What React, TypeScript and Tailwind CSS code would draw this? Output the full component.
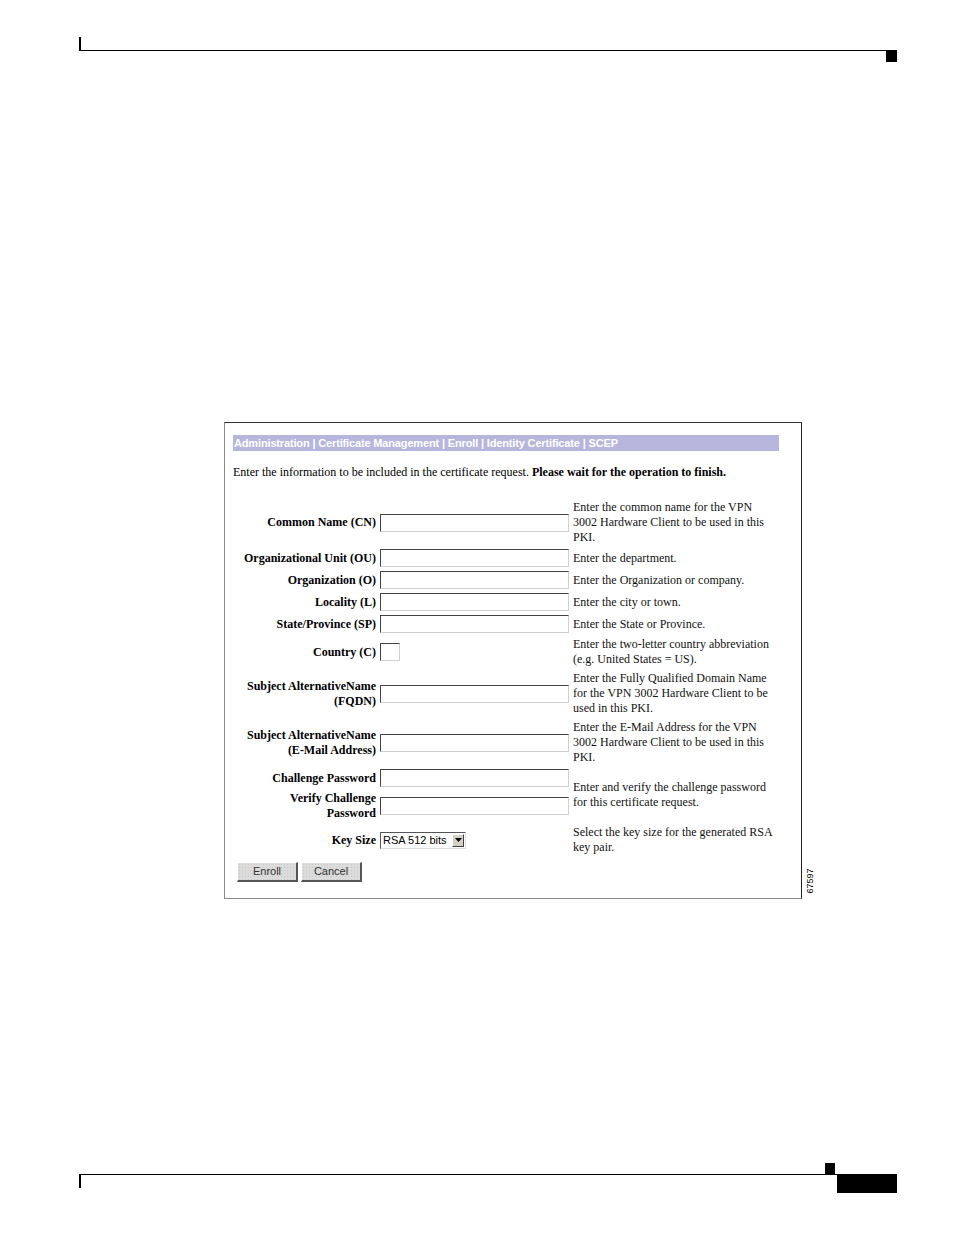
import type { ReactNode } from "react";

type Row = {
  label: ReactNode;
  input: "text" | "short" | "select" | "none";
  desc?: ReactNode;
  descSpan?: number;
};

const serif = { fontFamily: '"Liberation Serif", "Times New Roman", serif' };
const sans = { fontFamily: '"Liberation Sans", Arial, sans-serif' };

const rows: Row[] = [
  {
    label: "Common Name (CN)",
    input: "text",
    desc: (
      <>
        Enter the common name for the VPN
        <br />
        3002 Hardware Client to be used in this
        <br />
        PKI.
      </>
    ),
  },
  { label: "Organizational Unit (OU)", input: "text", desc: "Enter the department." },
  { label: "Organization (O)", input: "text", desc: "Enter the Organization or company." },
  { label: "Locality (L)", input: "text", desc: "Enter the city or town." },
  { label: "State/Province (SP)", input: "text", desc: "Enter the State or Province." },
  {
    label: "Country (C)",
    input: "short",
    desc: (
      <>
        Enter the two-letter country abbreviation
        <br />
        (e.g. United States = US).
      </>
    ),
  },
  {
    label: (
      <>
        Subject AlternativeName
        <br />
        (FQDN)
      </>
    ),
    input: "text",
    desc: (
      <>
        Enter the Fully Qualified Domain Name
        <br />
        for the VPN 3002 Hardware Client to be
        <br />
        used in this PKI.
      </>
    ),
  },
  {
    label: (
      <>
        Subject AlternativeName
        <br />
        (E-Mail Address)
      </>
    ),
    input: "text",
    desc: (
      <>
        Enter the E-Mail Address for the VPN
        <br />
        3002 Hardware Client to be used in this
        <br />
        PKI.
      </>
    ),
  },
  {
    label: "Challenge Password",
    input: "text",
    descSpan: 2,
    desc: (
      <>
        Enter and verify the challenge password
        <br />
        for this certificate request.
      </>
    ),
  },
  {
    label: (
      <>
        Verify Challenge
        <br />
        Password
      </>
    ),
    input: "text",
  },
  {
    label: "Key Size",
    input: "select",
    desc: (
      <>
        Select the key size for the generated RSA
        <br />
        key pair.
      </>
    ),
  },
];

function TextBox({ short }: { short?: boolean }) {
  return (
    <div
      className={
        "h-[18px] bg-white border-t border-l border-t-[#444] border-l-[#444] border-b border-r border-b-[#d0d0d0] border-r-[#d0d0d0] " +
        (short ? "w-[20px]" : "w-[189px]")
      }
    />
  );
}

function KeySelect() {
  return (
    <div
      className="flex h-[17px] w-[86px] items-center bg-white border-t border-l border-t-[#555] border-l-[#555] border-b border-r border-b-[#ddd] border-r-[#ddd]"
      style={sans}
    >
      <span className="flex-1 pl-[2px] text-[11px] leading-[13px] text-black">
        RSA 512 bits
      </span>
      <span className="mr-[1px] flex h-[13px] w-[12px] items-center justify-center bg-[#d4d0c8] border-t border-l border-t-white border-l-white border-b border-r border-b-[#404040] border-r-[#404040]">
        <svg width="7" height="4" viewBox="0 0 7 4">
          <path d="M0 0h7L3.5 4z" fill="#000" />
        </svg>
      </span>
    </div>
  );
}

function Button({ children }: { children: ReactNode }) {
  return (
    <div
      className="flex h-[20px] w-[61px] items-center justify-center bg-[#dcdcdc] border-t border-l border-t-white border-l-white border-b-2 border-r-2 border-b-[#555] border-r-[#555] text-[11px] text-[#333]"
      style={{
        ...sans,
        backgroundImage:
          "radial-gradient(circle, #c8c8c8 0.6px, transparent 0.7px)",
        backgroundSize: "3px 3px",
      }}
    >
      {children}
    </div>
  );
}

export default function App() {
  return (
    <div className="flex h-[1235px] w-[954px] flex-col bg-white">
      {/* page header */}
      <div className="pt-[37px]">
        <div className="ml-[79px] h-[14px] w-[818px] border-l-2 border-b-[1.5px] border-black" />
        <div className="flex justify-end pr-[57px]">
          <div className="h-[11px] w-[11px] bg-black" />
        </div>
      </div>

      {/* screen capture */}
      <div className="relative ml-[224px] mt-[360px] h-[477px] w-[578px] border border-[#8a8a8a] border-t-[#333] border-r-[#222] pl-[8px] pt-[12px]">
        <div
          className="h-[16px] w-[546px] bg-[#b6b6dc] pl-[1px] text-[11px] font-bold leading-[16px] tracking-[-0.15px] text-white"
          style={sans}
        >
          Administration | Certificate Management | Enroll | Identity Certificate | SCEP
        </div>

        <p className="mt-[14px] text-[12px] leading-[15px] text-black" style={serif}>
          Enter the information to be included in the certificate request.{" "}
          <b>Please wait for the operation to finish.</b>
        </p>

        <table className="mt-[18px] border-collapse" style={serif}>
          <tbody>
            {rows.map((r, i) => (
              <tr key={i}>
                <td className="w-[147px] py-[2px] pr-[4px] text-right align-middle text-[12px] font-bold leading-[15px] text-black whitespace-nowrap">
                  {r.label}
                </td>
                <td className="w-[193px] py-[2px] align-middle">
                  {r.input === "text" && <TextBox />}
                  {r.input === "short" && <TextBox short />}
                  {r.input === "select" && <KeySelect />}
                </td>
                {r.desc !== undefined && (
                  <td
                    rowSpan={r.descSpan}
                    className="py-[2px] align-middle text-[12px] leading-[15px] text-[#111] whitespace-nowrap"
                  >
                    {r.desc}
                  </td>
                )}
              </tr>
            ))}
          </tbody>
        </table>

        <div className="ml-[4px] mt-[5px] flex gap-[3px]">
          <Button>Enroll</Button>
          <Button>Cancel</Button>
        </div>

        {/* figure number */}
        <div className="absolute bottom-[12px] right-[-21px] -rotate-90 text-[9px] leading-[10px] text-black" style={sans}>
          67597
        </div>
      </div>

      {/* page footer */}
      <div className="mt-auto pb-[42px]">
        <div className="flex justify-end pr-[119px]">
          <div className="h-[11px] w-[10px] bg-black" />
        </div>
        <div className="ml-[79px] flex w-[818px] items-start">
          <div className="h-[14px] flex-1 border-l-2 border-t-[1.5px] border-black" />
          <div className="h-[19px] w-[60px] bg-black" />
        </div>
      </div>
    </div>
  );
}
